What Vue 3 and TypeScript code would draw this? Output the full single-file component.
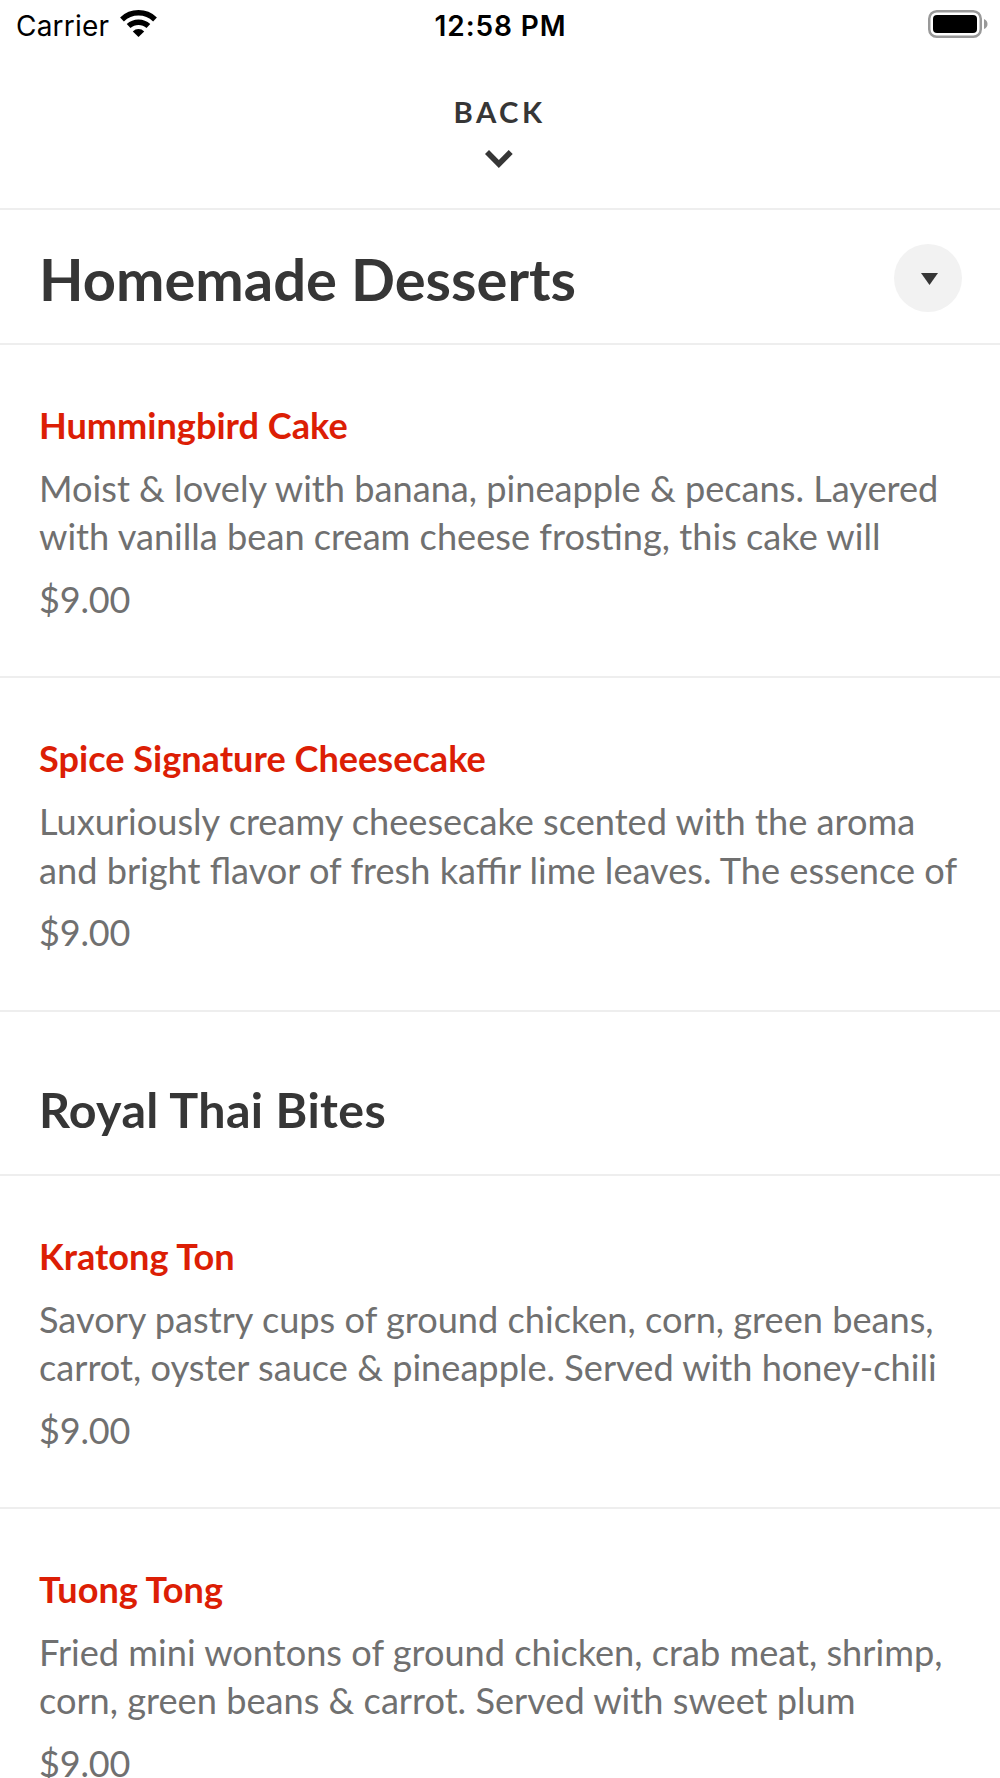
<script setup lang="ts">
interface Dish { name: string; lines: string[]; price: string }
const desserts: Dish[] = [
  { name: 'Hummingbird Cake', lines: ['Moist & lovely with banana, pineapple & pecans. Layered', 'with vanilla bean cream cheese frosting, this cake will'], price: '$9.00' },
  { name: 'Spice Signature Cheesecake', lines: ['Luxuriously creamy cheesecake scented with the aroma', 'and bright flavor of fresh kaffir lime leaves. The essence of'], price: '$9.00' },
]
const bites: Dish[] = [
  { name: 'Kratong Ton', lines: ['Savory pastry cups of ground chicken, corn, green beans,', 'carrot, oyster sauce & pineapple. Served with honey-chili'], price: '$9.00' },
  { name: 'Tuong Tong', lines: ['Fried mini wontons of ground chicken, crab meat, shrimp,', 'corn, green beans & carrot. Served with sweet plum'], price: '$9.00' },
]
const sections = [
  { title: 'Homemade Desserts', dishes: desserts, main: true },
  { title: 'Royal Thai Bites', dishes: bites, main: false },
]
</script>

<template>
  <main class="screen">
    <div class="status">
      <div class="carrier">
        <span>Carrier</span>
        <svg class="wifi" width="37" height="27" viewBox="0 0 37 27">
          <path d="M18.500 27l-5.700-5.600a8.200 8.200 0 0 1 11.400 0z" />
          <path d="M8.600 16a14.600 14.600 0 0 1 19.800 0M2 9.400a24 24 0 0 1 33 0" fill="none" stroke="#000" stroke-width="5.500" />
        </svg>
      </div>
      <span class="time">12:58 PM</span>
      <svg class="battery" width="60" height="28" viewBox="0 0 60 28">
        <rect x="1.250" y="1.250" width="51.500" height="25.500" rx="7.500" fill="none" stroke="#999" stroke-width="2.500" />
        <rect x="5" y="5" width="44" height="18" rx="4" />
        <path d="M56 9q3.500 1.500 3.500 5t-3.500 5z" fill="#999" />
      </svg>
    </div>
    <header class="back">
      <span>BACK</span>
      <svg width="28" height="18" viewBox="0 0 28 18"><path d="M4 0L0 4l13.850 14L27.700 4l-4-4-9.850 9.900z" fill="#363636" /></svg>
    </header>
    <section v-for="s in sections" :key="s.title">
      <div class="heading" :class="{ main: s.main }">
        <h2>{{ s.title }}</h2>
        <button v-if="s.main" class="toggle" aria-label="Choose section">
          <svg width="17" height="12" viewBox="0 0 17 12"><path d="M0 0h17L8.500 12z" fill="#363636" /></svg>
        </button>
      </div>
      <article v-for="d in s.dishes" :key="d.name" class="dish">
        <h3>{{ d.name }}</h3>
        <p class="desc"><span v-for="l in d.lines" :key="l">{{ l }}</span></p>
        <p class="price">{{ d.price }}</p>
      </article>
    </section>
  </main>
</template>

<style>
body { margin: 0; overflow: hidden; background: #fff; }
</style>
<style scoped>
.screen { width: 1000px; height: 1778px; overflow: hidden; font-family: Lato, sans-serif; color: #363636; background: #fff; }
.status { height: 50px; display: grid; grid-template-columns: 1fr auto 1fr; align-items: center; padding: 1px 12px 0 16px; box-sizing: border-box; font-family: Inter, sans-serif; font-size: 28px; color: #000; }
.carrier { display: flex; align-items: center; gap: 10.500px; letter-spacing: 0.200px; }
.carrier span, .time { padding-top: 1px; }
.wifi { margin-top: -4px; }
.time { font-weight: 600; letter-spacing: 0.900px; margin-left: -3px; }
.battery { justify-self: end; margin-top: -3px; }
.back { height: 160px; box-sizing: border-box; border-bottom: 2px solid #eee; display: flex; flex-direction: column; align-items: center; padding: 44px 3px 0 0; font-size: 29.300px; font-weight: 700; letter-spacing: 3.500px; line-height: 36px; }
.back span { margin-right: -2px; }
.back svg { margin-top: 20px; }
h2, h3, p { margin: 0; }
.heading { height: 164px; box-sizing: border-box; padding: 32px 38px 0 39px; border-bottom: 2px solid #eee; display: flex; align-items: center; justify-content: space-between; }
.heading h2 { font-size: 48.400px; font-weight: 700; line-height: 60px; letter-spacing: 0.350px; }
.heading.main { height: 135px; padding-top: 2px; }
.heading.main h2 { font-size: 57.900px; letter-spacing: 0; padding-top: 2px; }
.toggle { width: 68px; height: 68px; border: 0; border-radius: 50%; background: #f2f2f2; display: grid; place-items: center; padding: 2px 0 0 2px; }
.dish { height: 333.300px; box-sizing: border-box; border-bottom: 2px solid #eee; padding: 56px 39px 0; white-space: nowrap; }
h3 { color: #dc1e05; font-size: 36.120px; line-height: 48px; font-weight: 700; }
.desc { margin-top: 15px; color: #707070; font-size: 36.190px; line-height: 48.400px; }
.desc span { display: block; }
.price { margin-top: 14.200px; color: #707070; font-size: 36px; line-height: 48px; letter-spacing: -0.150px; }
</style>
